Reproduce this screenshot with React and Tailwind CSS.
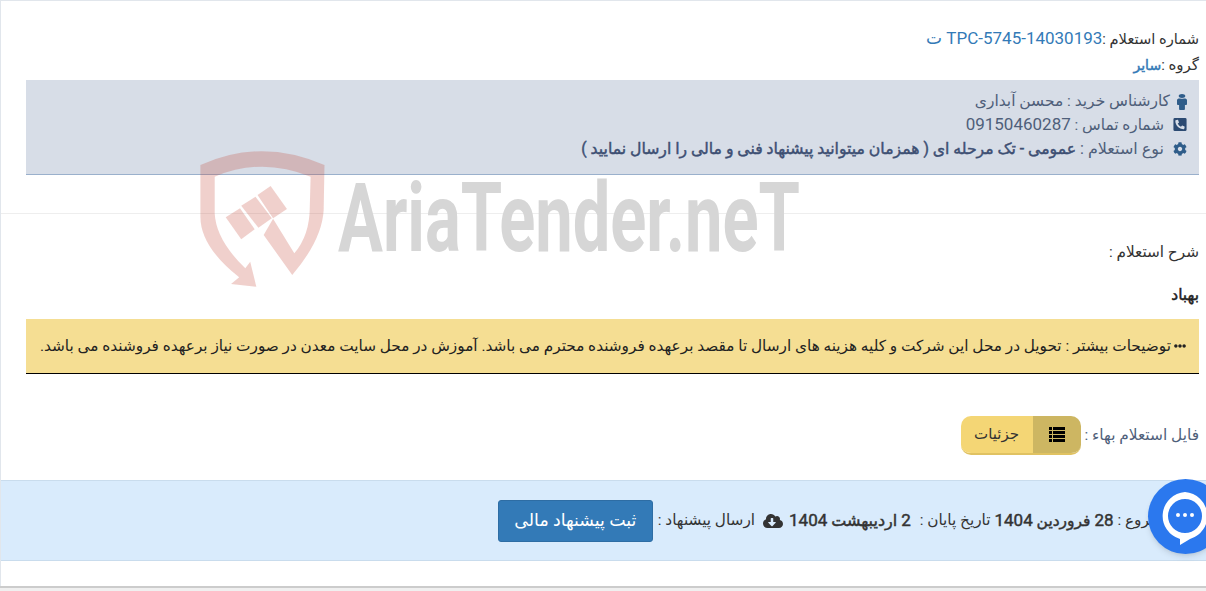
import React from "react";
import { FaMale, FaPhoneSquareAlt, FaCog, FaEllipsisH, FaCloudDownloadAlt } from "react-icons/fa";

const font = { fontFamily: "Roboto, 'DejaVu Sans', sans-serif" };

function Watermark() {
  return (
    <div className="absolute left-[180px] top-[140px] w-[640px] h-[160px] pointer-events-none">
      <svg width="640" height="160" viewBox="0 0 1568 480" preserveAspectRatio="none" className="absolute inset-0">
        <g fill="#c0392b" fillOpacity="0.24">
          <path
            fillRule="evenodd"
            d="M50 75 Q200 -8 354 75 L352 210 Q348 300 275 405 L205 285 L228 236 L280 340 Q318 285 318 200 L320 110 Q200 50 85 110 L85 220 Q88 300 160 385 L172 365 L187 440 L125 432 L145 412 Q50 320 50 230 Z"
          />
          <path d="M190 165 L222 138 L262 207 L228 235 Z" />
          <path d="M150 197 L185 170 L225 235 L192 263 Z" />
          <path d="M112 232 L147 205 L183 268 L150 298 Z" />
        </g>
      </svg>
      <svg width="860" height="160" viewBox="0 0 860 160" className="absolute left-0 top-0">
        <text
          x="158"
          y="111"
          textLength="462"
          lengthAdjust="spacingAndGlyphs"
          fill="#d6d6d6"
          fontSize="96"
          fontWeight="700"
          fontFamily="Roboto, sans-serif"
          direction="ltr"
        >
          AriaTender.neT
        </text>
      </svg>
    </div>
  );
}

function ChatBubble() {
  return (
    <div className="absolute left-[1148px] top-[479px] w-[75px] h-[75px] rounded-full bg-[#2b78ee] shadow-md flex items-center justify-center">
      <svg width="75" height="75" viewBox="0 0 75 75">
        <path
          fill="#fff"
          fillRule="evenodd"
          d="M37 13 A24 24 0 0 1 42 60 L32 66 L32 60 A24 24 0 0 1 37 13 Z M37 20 A17 17 0 1 0 37 54 A17 17 0 1 0 37 20 Z"
        />
        <circle cx="30" cy="36" r="2" fill="#fff" />
        <circle cx="37" cy="36" r="2" fill="#fff" />
        <circle cx="44" cy="36" r="2" fill="#fff" />
      </svg>
    </div>
  );
}

function ListIcon() {
  const rows = [0, 4, 8, 12];
  return (
    <svg width="16" height="15" viewBox="0 0 16 15">
      {rows.map((y) => (
        <g key={y} fill="#000">
          <rect x="0" y={y} width="3" height="3" />
          <rect x="4" y={y} width="12" height="3" />
        </g>
      ))}
    </svg>
  );
}

// regular weight with a thin stroke, DejaVu's real bold runs too wide here
const heavy = "font-normal [-webkit-text-stroke:0.45px_currentColor]";

export default function App() {
  return (
    <div dir="rtl" style={font} className="relative w-[1206px] h-[591px] overflow-hidden bg-white text-[15px] text-[#333]">
      <div className="h-[586px] border-t border-l border-[#e1e6ec] flex flex-col">
        <div className="h-[213px] border-b border-[#eeeeee] px-[7px] pt-[25px]">
          <div className="h-[24px] leading-[24px] text-[14.7px]">
            شماره استعلام :<span className="text-[#337ab7] text-[17px]">TPC-5745-14030193 ت</span>
          </div>
          <div className="h-[30px] leading-[30px]">
            گروه :<span className={`text-[#337ab7] text-[14px] ${heavy}`}>سایر</span>
          </div>
          <div className="ml-[18px] h-[95px] bg-[#d7dde7] border-b border-[#9ab0cc] pt-[10px] pr-[12px] text-[15.5px] text-[#4f5f7a]">
            <div className="h-[23px] flex items-center gap-[7px]">
              <FaMale className="text-[#2f5d8a] w-[10px] h-[16px]" preserveAspectRatio="none" />
              <span>کارشناس خرید : محسن آبداری</span>
            </div>
            <div className="h-[23px] flex items-center gap-[9px]">
              <FaPhoneSquareAlt className="text-[#2c4a72] w-[14px] h-[15px]" />
              <span className="text-[15.3px]">
                شماره تماس : <span className="text-[17px]">09150460287</span>
              </span>
            </div>
            <div className="h-[25px] flex items-center gap-[9px]">
              <FaCog className="text-[#2f5d8a] w-[14px] h-[14px]" />
              <span className="text-[16px]">
                نوع استعلام : <span className={`text-[15.7px] text-[#3d4f73] ${heavy}`}>عمومی - تک مرحله ای ( همزمان میتوانید پیشنهاد فنی و مالی را ارسال نمایید )</span>
              </span>
            </div>
          </div>
        </div>

        <div className="relative h-[266px] px-[7px]">
          <div className="mt-[26px] h-[24px] leading-[24px] text-[15.3px]">شرح استعلام :</div>
          <div className={`mt-[19px] h-[24px] leading-[24px] text-[15.5px] text-[#222] ${heavy}`}>بهباد</div>
          <div className="mt-[12px] ml-[18px] h-[55px] bg-[#f5de93] border-b border-black flex items-center pr-[13px] text-[15.3px] text-[#222]">
            <FaEllipsisH className="text-[12px] ml-[3px] shrink-0" />
            <span className="whitespace-nowrap">توضیحات بیشتر : تحویل در محل این شرکت و کلیه هزینه های ارسال تا مقصد برعهده فروشنده محترم می باشد. آموزش در محل سایت معدن در صورت نیاز برعهده فروشنده می باشد.</span>
          </div>
          <div className="mt-[42px] flex items-center gap-[4px]">
            <span className="text-[15.4px] text-[#4f5f7a]">فایل استعلام بهاء :</span>
            <div className="flex h-[39px] rounded-[10px] overflow-hidden border-b-2 border-[#e0c262]">
              <div className="w-[48px] bg-[#cdb662] flex items-center justify-center">
                <ListIcon />
              </div>
              <div className="w-[72px] bg-[#f4d675] flex items-center justify-center">جزئیات</div>
            </div>
          </div>
        </div>

        <div className="h-[81px] bg-[#d9ebfc] border-t border-b border-[#c9dced] flex items-center pr-[9px] whitespace-nowrap text-[15.3px]">
          <span>تاریخ شروع : </span>
          <span className={`text-[15.5px] mr-[4px] ${heavy}`}>
            <span className="text-[17px]">28</span> فروردین <span className="text-[17px]">1404</span>
          </span>
          <span className="mr-[4px]">تاریخ پایان : </span>
          <span className={`text-[16px] mr-[9px] ${heavy}`}>
            <span className="text-[17px]">2</span> اردیبهشت <span className="text-[17px]">1404</span>
          </span>
          <FaCloudDownloadAlt className="text-[20px] mr-[6px] text-[#333]" />
          <span className="mr-[8px]">ارسال پیشنهاد : </span>
          <button className="mr-[5px] w-[155px] h-[42px] rounded-[3px] bg-[#337ab7] border border-[#2e6da4] text-white text-[17.4px]">
            ثبت پیشنهاد مالی
          </button>
        </div>
      </div>
      <div className="h-[5px] border-t-2 border-[#cccccc] bg-[#f0f0f0]" />

      <Watermark />
      <ChatBubble />
    </div>
  );
}
